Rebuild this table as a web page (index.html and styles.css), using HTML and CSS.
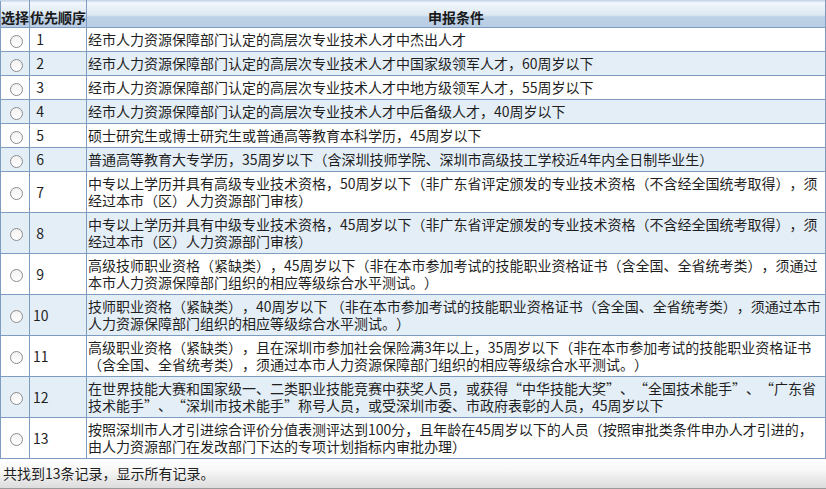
FILE: index.html
```html
<!DOCTYPE html>
<html lang="zh-CN">
<head>
<meta charset="utf-8">
<title>申报条件</title>
<link rel="stylesheet" href="styles.css">
</head>
<body>
<div class="grid">
  <table class="tbl">
    <colgroup>
      <col class="col-sel">
      <col class="col-ord">
      <col class="col-cond">
    </colgroup>
    <thead>
      <tr>
        <th>选择</th>
        <th>优先顺序</th>
        <th>申报条件</th>
      </tr>
    </thead>
    <tbody>
      <tr><td class="sel"><span class="radio"></span></td><td class="ord">&nbsp;1</td><td class="cond">经市人力资源保障部门认定的高层次专业技术人才中杰出人才</td></tr>
      <tr class="alt"><td class="sel"><span class="radio"></span></td><td class="ord">&nbsp;2</td><td class="cond">经市人力资源保障部门认定的高层次专业技术人才中国家级领军人才，60周岁以下</td></tr>
      <tr><td class="sel"><span class="radio"></span></td><td class="ord">&nbsp;3</td><td class="cond">经市人力资源保障部门认定的高层次专业技术人才中地方级领军人才，55周岁以下</td></tr>
      <tr class="alt"><td class="sel"><span class="radio"></span></td><td class="ord">&nbsp;4</td><td class="cond">经市人力资源保障部门认定的高层次专业技术人才中后备级人才，40周岁以下</td></tr>
      <tr><td class="sel"><span class="radio"></span></td><td class="ord">&nbsp;5</td><td class="cond">硕士研究生或博士研究生或普通高等教育本科学历，45周岁以下</td></tr>
      <tr class="alt"><td class="sel"><span class="radio"></span></td><td class="ord">&nbsp;6</td><td class="cond">普通高等教育大专学历，35周岁以下（含深圳技师学院、深圳市高级技工学校近4年内全日制毕业生）</td></tr>
      <tr><td class="sel"><span class="radio"></span></td><td class="ord">&nbsp;7</td><td class="cond">中专以上学历并具有高级专业技术资格，50周岁以下（非广东省评定颁发的专业技术资格（不含经全国统考取得），须经过本市（区）人力资源部门审核）</td></tr>
      <tr class="alt"><td class="sel"><span class="radio"></span></td><td class="ord">&nbsp;8</td><td class="cond">中专以上学历并具有中级专业技术资格，45周岁以下（非广东省评定颁发的专业技术资格（不含经全国统考取得），须经过本市（区）人力资源部门审核）</td></tr>
      <tr><td class="sel"><span class="radio"></span></td><td class="ord">&nbsp;9</td><td class="cond">高级技师职业资格（紧缺类），45周岁以下（非在本市参加考试的技能职业资格证书（含全国、全省统考类），须通过本市人力资源保障部门组织的相应等级综合水平测试。）</td></tr>
      <tr class="alt"><td class="sel"><span class="radio"></span></td><td class="ord">10</td><td class="cond">技师职业资格（紧缺类），40周岁以下 （非在本市参加考试的技能职业资格证书（含全国、全省统考类），须通过本市人力资源保障部门组织的相应等级综合水平测试。）</td></tr>
      <tr><td class="sel"><span class="radio"></span></td><td class="ord">11</td><td class="cond">高级职业资格（紧缺类），且在深圳市参加社会保险满3年以上，35周岁以下（非在本市参加考试的技能职业资格证书（含全国、全省统考类），须通过本市人力资源保障部门组织的相应等级综合水平测试。）</td></tr>
      <tr class="alt"><td class="sel"><span class="radio"></span></td><td class="ord">12</td><td class="cond">在世界技能大赛和国家级一、二类职业技能竞赛中获奖人员，或获得“中华技能大奖”、“全国技术能手”、“广东省技术能手”、“深圳市技术能手”称号人员，或受深圳市委、市政府表彰的人员，45周岁以下</td></tr>
      <tr><td class="sel"><span class="radio"></span></td><td class="ord">13</td><td class="cond">按照深圳市人才引进综合评价分值表测评达到100分，且年龄在45周岁以下的人员（按照审批类条件申办人才引进的，由人力资源部门在发改部门下达的专项计划指标内审批办理）</td></tr>
    </tbody>
  </table>
  <div class="footer">共找到13条记录，显示所有记录。</div>
</div>
</body>
</html>
```

FILE: styles.css
```css
html, body {
  margin: 0;
  padding: 0;
  background: #ffffff;
}

body {
  font-family: "Noto Sans CJK SC", "Noto Sans", sans-serif;
  font-size: 14px;
  color: #1f1f1f;
  text-spacing-trim: space-all;
}

.grid {
  width: 826px;
}

.tbl {
  width: 825px;
  table-layout: fixed;
  border-collapse: collapse;
  border: 1px solid #7d9cc0;
}

.col-sel { width: 29px; }
.col-ord { width: 57px; }
.col-cond { width: 739px; }

.tbl th {
  height: 26px;
  padding: 0;
  font-weight: bold;
  font-size: 14px;
  color: #1a1a1a;
  text-align: center;
  vertical-align: bottom;
  line-height: 20px;
  border: 1px solid #7d9cc0;
  border-top-color: #c9d8e8;
  background: linear-gradient(to bottom, #f3f7fb 0px, #dce7f2 14px, #bcd0e6 15px, #b8cde4 27px);
}

.tbl td {
  border: 1px solid #7d9cc0;
  padding: 3px 2px;
  line-height: 17px;
  vertical-align: middle;
}

.tbl td.cond {
  padding: 3px 4px 3px 1px;
}

.tbl tr.alt td {
  background: #e4eef7;
}

.tbl td.sel {
  padding: 0;
  text-align: center;
}

.tbl td.ord {
  padding-left: 3px;
}

.radio {
  display: inline-block;
  width: 11px;
  height: 11px;
  border: 1px solid #8c8c8c;
  border-radius: 50%;
  background: linear-gradient(to bottom, #f2f2f2, #ffffff);
  vertical-align: middle;
  margin-left: 2px;
}

.footer {
  height: 29px;
  line-height: 28px;
  padding-left: 3px;
  border-bottom: 1px solid #9a9a9a;
  background: linear-gradient(to bottom, #ffffff 0%, #f7f7f7 40%, #dcdcdc 100%);
  color: #1f1f1f;
}
```
